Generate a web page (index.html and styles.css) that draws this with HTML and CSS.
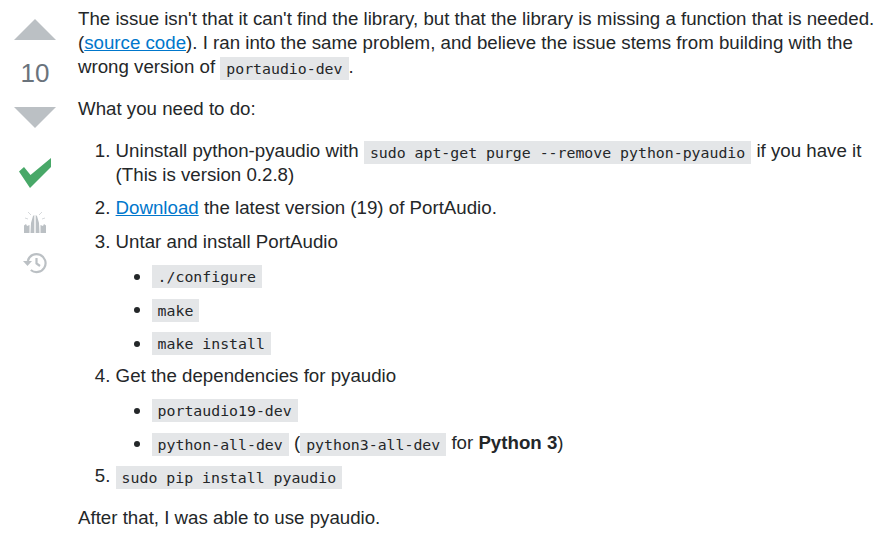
FILE: index.html
```html
<!DOCTYPE html>
<html lang="en">
<head>
<meta charset="utf-8">
<title>Answer</title>
<link rel="stylesheet" href="styles.css">
</head>
<body>
<div class="answer">
  <div class="votes">
    <svg class="arrow up" width="42" height="21" viewBox="0 0 42 21"><path d="M0 21L21 0L42 21Z"/></svg>
    <div class="count">10</div>
    <svg class="arrow down" width="42" height="21" viewBox="0 0 42 21"><path d="M0 0L42 0L21 21Z"/></svg>
    <svg class="check" width="32" height="30" viewBox="0 0 32 30"><path d="M0 13.500L5 9L11.500 17L32 0V9L11 30Z"/></svg>
    <svg class="hands" width="22" height="22" viewBox="0 0 22 22">
      <path class="palm" d="M0 22V14.500L2 13L3 15L5.500 14V22Z M6.500 22L7 12L9 5L10.300 4V22Z M11.700 22V4L13 5L15 12L15.500 22Z M16.500 22V14L19 15L20 13L22 14.500V22Z"/>
      <path class="rays" d="M4 1L7 4M18 1L15 4M1 7L4 8M21 7L18 8"/>
    </svg>
    <svg class="history" width="24" height="22" viewBox="0 0 24 22">
      <path class="ring" d="M4.800 9A9 9 0 1 1 7.800 18"/>
      <path class="tip" d="M0 9H9L4.500 14Z"/>
      <path class="ring hand" d="M13.500 6V11.500L17 14"/>
    </svg>
  </div>
  <div class="post">
    <p>The issue isn't that it can't find the library, but that the library is missing a function that is needed. (<a href="#">source code</a>). I ran into the same problem, and believe the issue stems from building with the wrong version of <code>portaudio-dev</code>.</p>
    <p>What you need to do:</p>
    <ol>
      <li>Uninstall python-pyaudio with <code>sudo apt-get purge --remove python-pyaudio</code> if you have it (This is version 0.2.8)</li>
      <li><a href="#">Download</a> the latest version (19) of PortAudio.</li>
      <li>Untar and install PortAudio
        <ul>
          <li><code>./configure</code></li>
          <li><code>make</code></li>
          <li><code>make install</code></li>
        </ul>
      </li>
      <li>Get the dependencies for pyaudio
        <ul>
          <li><code>portaudio19-dev</code></li>
          <li><code>python-all-dev</code> (<code>python3-all-dev</code> for <b>Python 3</b>)</li>
        </ul>
      </li>
      <li><code>sudo pip install pyaudio</code></li>
    </ol>
    <p>After that, I was able to use pyaudio.</p>
  </div>
</div>
</body>
</html>
```
FILE: styles.css
```css
html, body {
  margin: 0;
  padding: 0;
  background: #fff;
}
body {
  font-family: "Liberation Sans", Arial, sans-serif;
  font-size: 18.700px;
  line-height: 24px;
  color: #242729;
  overflow: hidden;
}
.answer {
  display: flex;
  align-items: flex-start;
  padding-top: 7px;
}
.votes {
  width: 78px;
  flex: none;
  padding: 12px 8px 0 0;
  box-sizing: border-box;
  display: flex;
  flex-direction: column;
  align-items: center;
}
.arrow path { fill: #bbc0c4; }
.count {
  font-size: 26px;
  line-height: 30px;
  color: #6a737c;
  margin: 18px 0 19px;
}
.check {
  margin-top: 30px;
  fill: #48a868;
}
.hands { margin-top: 23px; }
.palm { fill: #bbc0c4; }
.rays { stroke: #d6d9dc; stroke-width: 1; fill: none; }
.history { margin-top: 19px; }
.ring { fill: none; stroke: #bbc0c4; stroke-width: 2.200; }
.tip { fill: #bbc0c4; }
.post { flex: 1; min-width: 0; }
p { margin: 0 0 18px; }
a { color: #0077cc; text-decoration: underline; }
code {
  font-family: "DejaVu Sans Mono", monospace;
  font-size: 14.850px;
  background: #e4e6e8;
  padding: 2.500px 6px;
  line-height: 17px;
}
ol, ul { margin: 0 0 18px; padding: 0 0 0 37.600px; }
ul { margin: 10px 0 0; padding-left: 36px; list-style: disc; }
ol > li + li { margin-top: 9.300px; }
ul > li + li { margin-top: 9.500px; }
ol > li:last-child { margin-top: 9px; }
b { font-weight: bold; }
```
